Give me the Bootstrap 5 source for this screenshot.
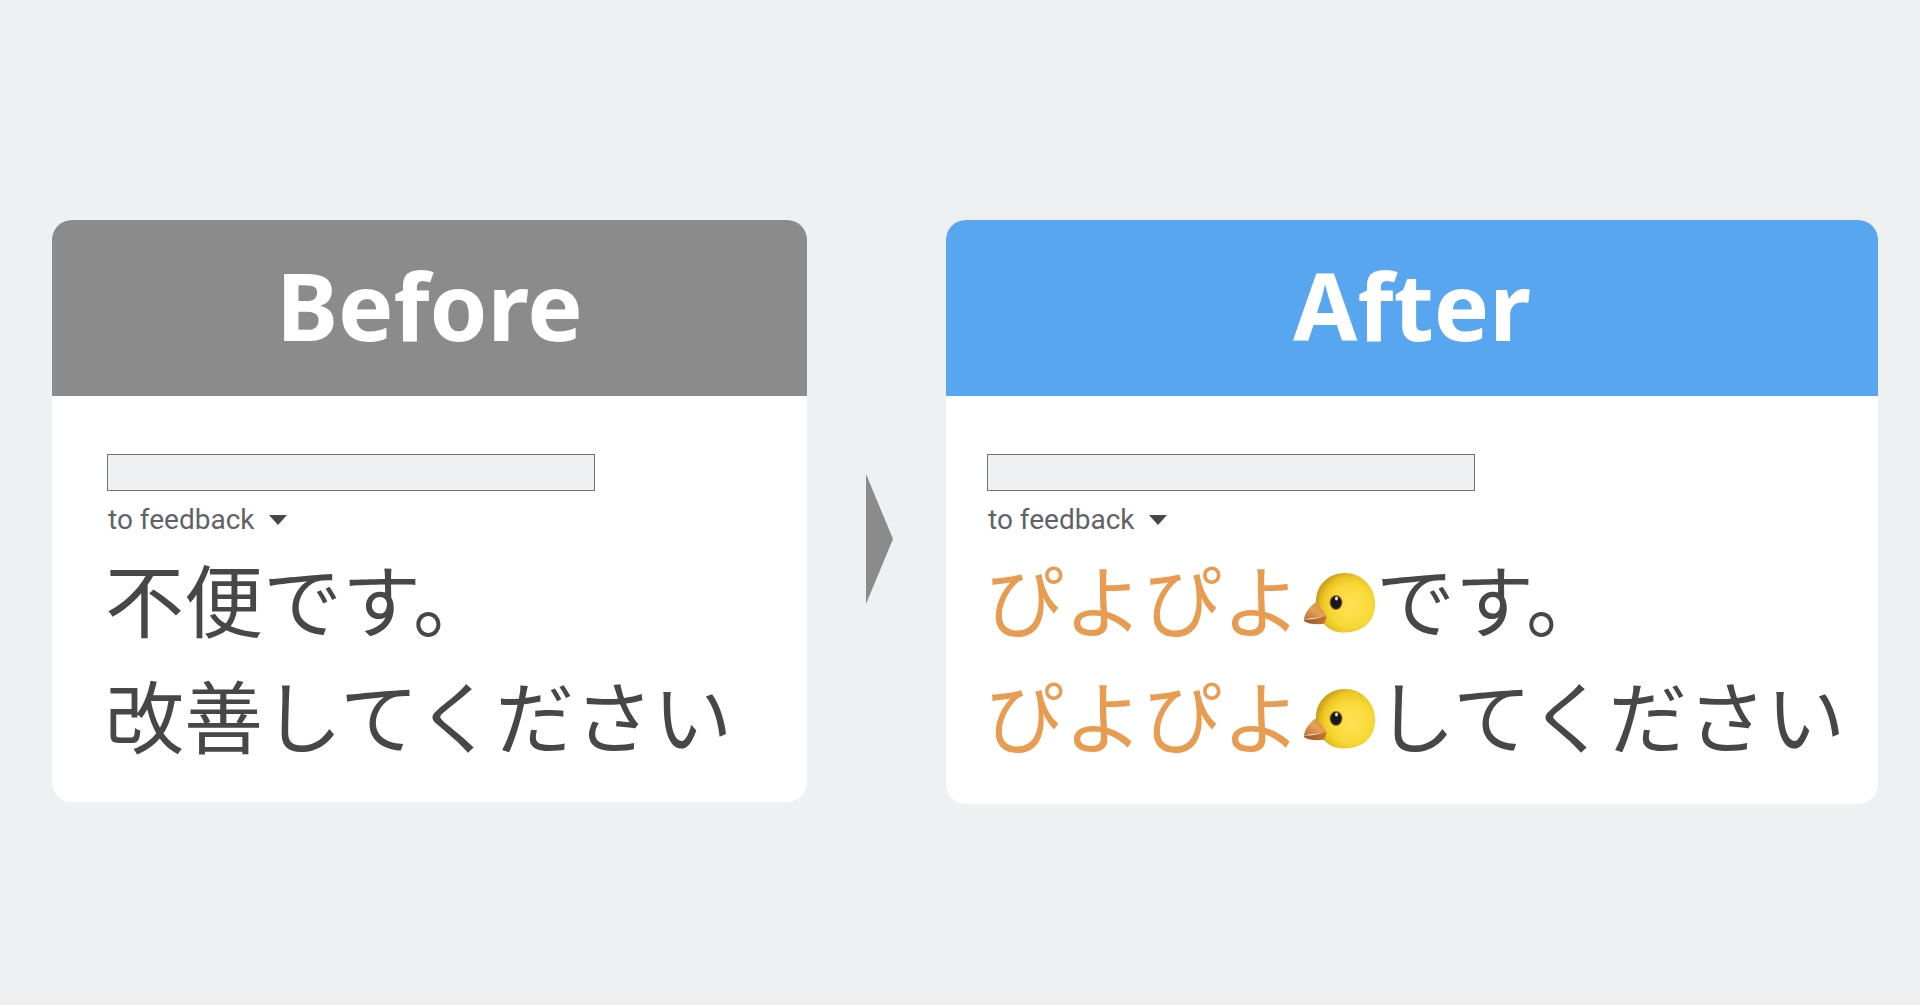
<!DOCTYPE html>
<html lang="ja">
<head>
<meta charset="utf-8">
<meta name="viewport" content="width=device-width, initial-scale=1">
<title>Before / After</title>
<link href="https://cdn.jsdelivr.net/npm/bootstrap@5.3.0/dist/css/bootstrap.min.css" rel="stylesheet">
<style>
  body { background: #eff0f2; font-family: "Noto Sans CJK JP", sans-serif; }
  .compare { padding: 220px 42px 40px 52px; }
  .panel { border-radius: 20px; min-width: 0; }
  .panel-before { flex: 755 1 0; }
  .panel-after { flex: 932 1 0; }
  .panel-head { height: 176px; padding-bottom: 6px; color: #fff; }
  .panel-head h2 { font: 700 93px/110px "Noto Sans", "Noto Sans CJK JP", sans-serif; }
  .head-gray { background: #8b8b8b; }
  .head-blue { background: #58a5f0; }
  .panel-main { padding: 58px 24px 30px 55px; }
  .panel-after .panel-main { padding: 58px 24px 32px 41px; }
  .sender { width: 488px; max-width: 100%; height: 37px; background: #eff0f2; border: 1px solid #707070; padding: 0 8px; }
  .recipient { margin-top: 13px; gap: 14px; padding: 0 0 0 1px; font: 400 28px/32px Roboto, sans-serif; color: #5f6368; }
  .message { margin: 4px 0 0 -2px; font-size: 79px; line-height: 116px; color: #474747; }
  .piyo { color: #e79c52; }
  .chick { width: 78px; height: 78px; margin: 0 0 0 -3px; vertical-align: -9px; }
  .arrow-cell { flex: 0 0 139px; padding: 53px 0 0 6px; }
</style>
<script src="https://cdn.jsdelivr.net/npm/bootstrap@5.3.0/dist/js/bootstrap.bundle.min.js"></script>
</head>
<body>
<svg class="position-absolute" width="0" height="0" aria-hidden="true">
  <defs>
    <radialGradient id="face" cx=".6" cy=".55" r=".6">
      <stop offset="0" stop-color="#ffe256"/>
      <stop offset=".6" stop-color="#f8d835"/>
      <stop offset=".82" stop-color="#ecc524"/>
      <stop offset="1" stop-color="#cf9d18"/>
    </radialGradient>
    <linearGradient id="beak" x1="0" y1="1" x2="1" y2="0">
      <stop offset="0" stop-color="#b87036"/>
      <stop offset=".5" stop-color="#e3a056"/>
      <stop offset="1" stop-color="#cf8840"/>
    </linearGradient>
    <linearGradient id="jaw" x1="0" y1="0" x2="1" y2="0">
      <stop offset="0" stop-color="#9c5829"/>
      <stop offset="1" stop-color="#c47731"/>
    </linearGradient>
  </defs>
  <symbol id="chick" viewBox="0 0 78 78">
    <path fill="url(#face)" d="M47 10C63 10 77 23 77 41C77 58 65 69.500 46 69.500C38 69.500 31 67 26 61L18 40C17 23 30 10 47 10Z"/>
    <path fill="url(#beak)" d="M17.500 39.500C11 44 7 50 6 56.500C13 55 21 55 28.500 53C25 47 21 43 17.500 39.500Z"/>
    <path fill="url(#jaw)" d="M6 56.500C13 57 21 55 28.500 53C28 56 27 59 26 60.800C18 62 10 61 6 58Z"/>
    <ellipse cx="38" cy="39.500" rx="6.500" ry="7.500" fill="#a56b20"/>
    <ellipse cx="38" cy="39.500" rx="5.500" ry="6.500" fill="#17191b"/>
    <ellipse cx="38.500" cy="35.500" rx="1.500" ry="2" fill="#dfe3e6"/>
  </symbol>
</svg>

<main class="compare d-flex align-items-start">
  <section class="panel panel-before bg-white overflow-hidden">
    <div class="panel-head head-gray d-flex align-items-center justify-content-center"><h2 class="m-0">Before</h2></div>
    <div class="panel-main">
      <input class="sender d-block" type="text" aria-label="From">
      <button class="recipient d-flex align-items-center border-0 bg-transparent" type="button">to feedback
        <svg width="18" height="10" viewBox="0 0 18 10" aria-hidden="true"><path fill="#474747" d="M0 0H18L9 10Z"/></svg>
      </button>
      <p class="message text-nowrap">不便です。<br>改善してください</p>
    </div>
  </section>

  <div class="arrow-cell d-flex justify-content-center align-self-center">
    <svg width="27" height="130" viewBox="0 0 27 130" aria-hidden="true"><path fill="#8b8b8b" d="M0 0L27 65L0 130Z"/></svg>
  </div>

  <section class="panel panel-after bg-white overflow-hidden">
    <div class="panel-head head-blue d-flex align-items-center justify-content-center"><h2 class="m-0">After</h2></div>
    <div class="panel-main">
      <input class="sender d-block" type="text" aria-label="From">
      <button class="recipient d-flex align-items-center border-0 bg-transparent" type="button">to feedback
        <svg width="18" height="10" viewBox="0 0 18 10" aria-hidden="true"><path fill="#474747" d="M0 0H18L9 10Z"/></svg>
      </button>
      <p class="message text-nowrap"><span class="piyo">ぴよぴよ</span><svg class="chick" role="img" aria-label="ひよこ"><use href="#chick"/></svg>です。<br><span class="piyo">ぴよぴよ</span><svg class="chick" role="img" aria-label="ひよこ"><use href="#chick"/></svg>してください</p>
    </div>
  </section>
</main>
</body>
</html>
